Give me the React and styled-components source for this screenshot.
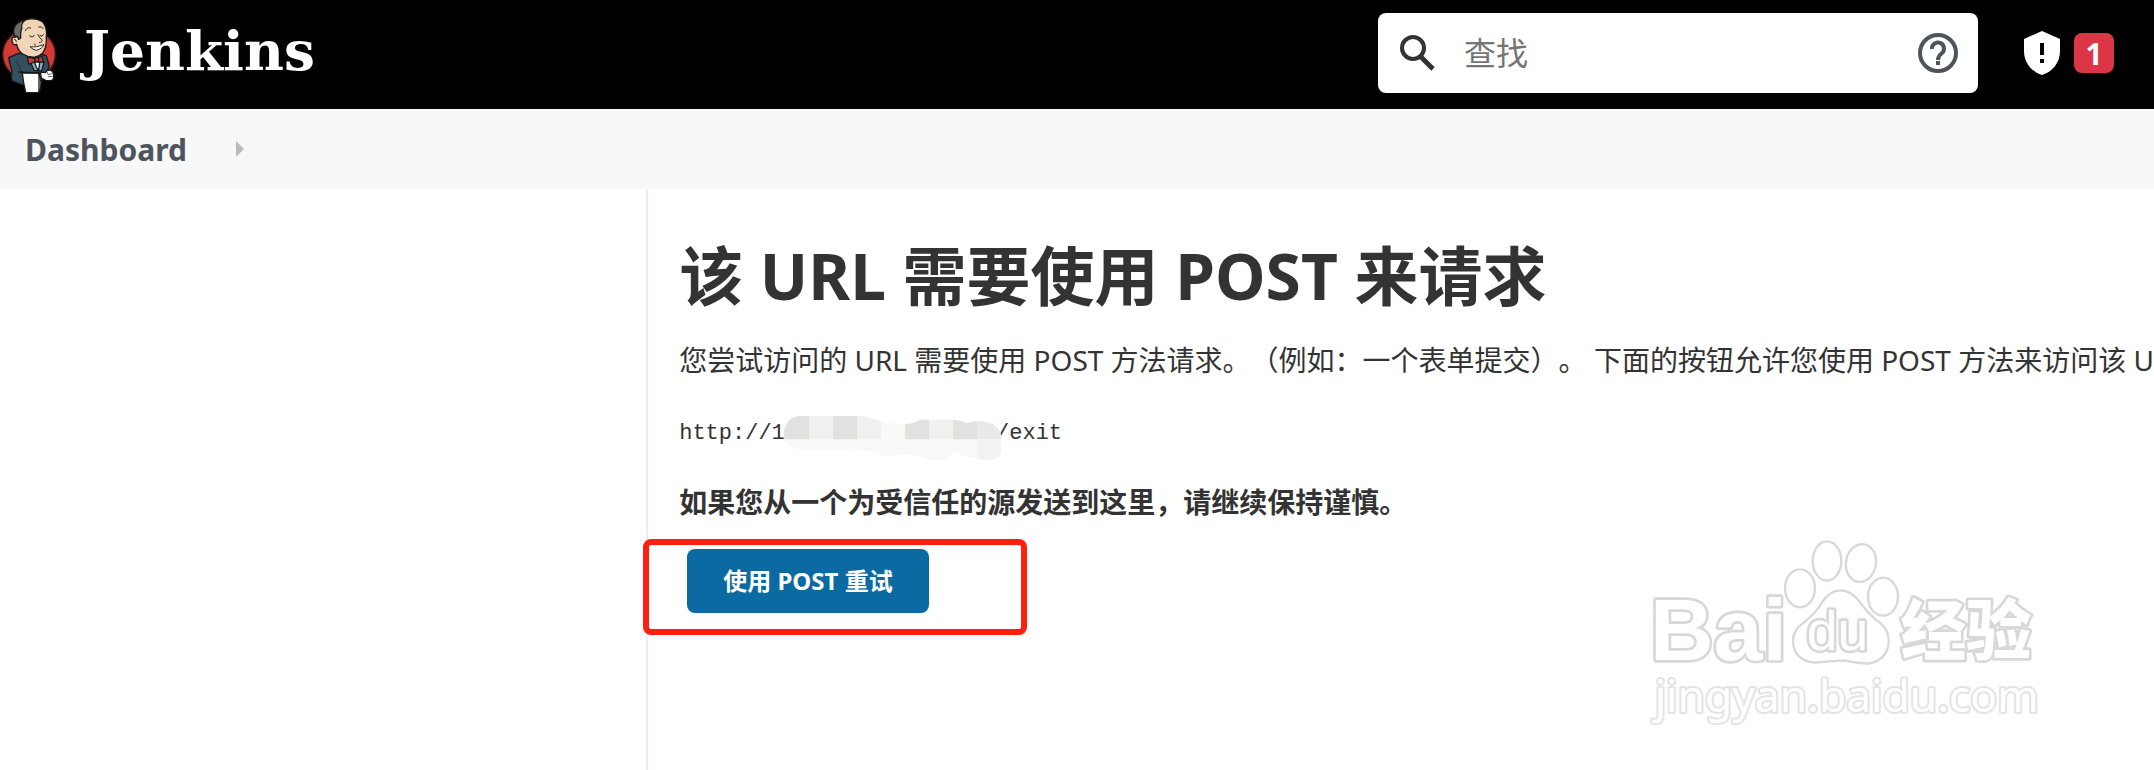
import React from 'react'
import styled, { createGlobalStyle } from 'styled-components'

const sans = '"Noto Sans", "Noto Sans CJK SC", sans-serif'
const textColor = '#333'
const slate = '#4d545d'

const GlobalStyle = createGlobalStyle`
  * {
    box-sizing: border-box;
  }

  body {
    margin: 0;
    background: #fff;
    color: ${textColor};
    font-family: ${sans};
    font-size: 28px;
    text-spacing-trim: space-all;
    overflow: hidden;
  }
`

const Page = styled.div`
  display: flex;
  flex-direction: column;
  min-height: 100vh;
  position: relative;
`

const Header = styled.header`
  display: flex;
  align-items: center;
  height: 109px;
  padding: 0 40px 4px 0;
  background: #000;
`

const Brand = styled.a`
  display: flex;
  align-items: center;
  gap: 14px;
  margin-right: auto;
  color: #fff;
  text-decoration: none;

  svg {
    display: block;
  }
`

const BrandName = styled.span`
  padding-bottom: 4px;
  font: bold 55px/96px "DejaVu Serif", serif;
`

const SearchBox = styled.form`
  display: flex;
  align-items: center;
  width: 600px;
  height: 80px;
  margin-right: 40px;
  padding: 0 20px;
  border-radius: 8px;
  background: #fff;

  label,
  a {
    display: flex;
  }
`

const SearchInput = styled.input`
  flex: 1;
  min-width: 0;
  margin: 0 24px 0 26px;
  padding: 0;
  border: 0;
  outline: 0;
  background: none;
  color: ${textColor};
  font: 32px/48px ${sans};

  &::placeholder {
    color: #757575;
    opacity: 1;
  }
`

const Monitor = styled.button`
  display: flex;
  align-items: center;
  gap: 14px;
  padding: 0 0 0 6px;
  border: 0;
  background: none;
  cursor: pointer;
`

const Badge = styled.span`
  width: 40px;
  height: 40px;
  border-radius: 8px;
  background: #dc3545;
  color: #fff;
  font: bold 30px/42px ${sans};
  text-align: center;
`

const Breadcrumbs = styled.nav`
  display: flex;
  align-items: center;
  gap: 49px;
  height: 80px;
  padding: 0 25px;
  background: #f8f8f8;

  a {
    color: ${slate};
    font-size: 30px;
    font-weight: bold;
    text-decoration: none;
  }
`

const Columns = styled.div`
  display: flex;
  flex: 1;
`

const SidePanel = styled.aside`
  flex: 0 0 30%;
`

const Main = styled.main`
  flex: 1;
  min-width: 0;
  padding: 40px 0 0 31px;
  border-left: 2px solid #e9eef0;
`

const Title = styled.h1`
  margin: 0;
  font-size: 64px;
  line-height: 94px;
  white-space: nowrap;
`

const Paragraph = styled.p`
  margin: ${props => props.$spaced ? '26px' : '16px'} 0 0;
  font-size: 28px;
  font-weight: ${props => props.$strong ? 'bold' : 'normal'};
  line-height: 42px;
  white-space: nowrap;
`

const Address = styled.pre`
  position: relative;
  margin: 32px 0 0;
  font: 22px/42px "Liberation Mono", monospace;
`

const Redaction = styled.svg`
  position: absolute;
  left: 103px;
  top: 2px;
`

const Actions = styled.form`
  position: relative;
  padding: 26px 0 0 8px;
`

const RetryButton = styled.button`
  display: block;
  height: 64px;
  padding: 0 36px;
  border: 0;
  border-radius: 8px;
  background: #0b6aa2;
  color: #fff;
  font: bold 24px/64px ${sans};
  cursor: pointer;
`

const Highlight = styled.div`
  position: absolute;
  left: -36px;
  top: 16px;
  width: 384px;
  height: 96px;
  border: 6px solid #ff1f0f;
  border-radius: 8px;
  pointer-events: none;
`

const Watermark = styled.svg`
  position: absolute;
  right: 94px;
  bottom: 30px;
  pointer-events: none;
`

const Butler = () => (
  <svg width="70" height="100" viewBox="0 0 210 300" aria-hidden="true">
    <ellipse cx="87" cy="154" rx="79" ry="76" fill="#d33833" stroke="#381a1a" strokeWidth="4" />
    <g stroke="#191919" strokeWidth="4" strokeLinejoin="round" strokeLinecap="round">
      <path d="M56 151 L26 164 Q31 190 36 204 Q32 222 37 234 L67 245 L119 240 L134 223 L148 190 L139 158 L120 153 Z" fill="#335061" />
      <path d="M47 102 Q34 101 36 113 Q38 129 50 124 Q54 143 68 153 Q86 164 106 162 Q128 157 134 139 Q140 124 139 101 Q142 75 129 58 Q113 45 86 48 Q61 53 53 72 Z" fill="#f0d6b7" />
      <path d="M75 51 Q50 56 43 73 Q38 85 43 99 Q54 98 56 109 L62 105 Q61 84 66 75 Q60 66 75 51 Z" fill="#6d6b6d" />
      <path d="M91 177 L109 173 L132 178 L125 204 L102 202 Z" fill="#81b0c4" />
      <path d="M104 178 L111 175 L119 179 L116 202 L109 193 Z" fill="#fff" />
      <path d="M82 162 L106 167 L126 160 L131 178 L113 176 L106 176 L86 184 Z" fill="#d33833" />
      <circle cx="110" cy="170" r="6" fill="#d33833" />
      <path d="M121 207 L136 209 Q142 198 153 202 Q162 207 161 220 Q162 231 151 233 L137 232 L124 225 Z" fill="#fff" />
      <path d="M67 210 L117 210 L123 237 L122 254 L117 268 L77 269 L71 240 Z" fill="#fff" />
      <path d="M56 207 L117 210 L117 266" fill="none" />
      <path d="M49 174 L67 209" fill="none" strokeWidth="2" />
      <path d="M142 208 L144 215 L157 212 M145 221 L157 220" fill="none" strokeWidth="2" />
    </g>
    <g fill="none" stroke="#30271f" strokeWidth="3" strokeLinecap="round">
      <path d="M76 83 Q81 71 92 75 M116 72 Q125 67 130 77" />
      <path d="M89 99 Q96 106 103 98 M120 98 Q126 103 131 95" />
      <path d="M114 95 Q119 107 126 110 Q128 118 118 119" />
      <path d="M91 132 Q109 134 132 125 Q127 137 109 142 Q98 140 91 132 Z" fill="#fff" />
      <path d="M44 109 Q48 108 49 116 M103 123 L107 126" />
    </g>
  </svg>
)

const SearchIcon = () => (
  <svg width="40" height="40" viewBox="0 0 40 40" fill="none" stroke={textColor} aria-hidden="true">
    <circle cx="15" cy="15" r="11" strokeWidth="4" />
    <path d="M23 24 L35 36" strokeWidth="5" />
  </svg>
)

const HelpIcon = () => (
  <svg width="40" height="40" viewBox="0 0 40 40" aria-hidden="true">
    <circle cx="20" cy="20" r="18" fill="none" stroke={slate} strokeWidth="4" />
    <path d="M14 16 A6 6 0 1 1 24 20 Q20 23 20 27" fill="none" stroke={slate} strokeWidth="4" />
    <path d="M18 28 H22 V32 H18 Z" fill={slate} />
  </svg>
)

const ShieldIcon = () => (
  <svg width="36" height="44" viewBox="0 0 36 44" aria-hidden="true">
    <path d="M18 0 L36 8 V20 C36 32 28 41 18 44 C8 41 0 32 0 20 V8 Z" fill="#fff" />
    <path d="M16 12 H20 V24 H16 Z M16 28 H20 V32 H16 Z" fill="#000" />
  </svg>
)

const AddressCover = () => (
  <Redaction width="220" height="46" viewBox="456 45 660 138" aria-hidden="true">
    <defs>
      <clipPath id="smudge">
        <path d="M460 100 Q470 50 510 48 H690 Q730 52 760 68 L830 71 Q855 70 870 59 H965 Q990 60 1010 70 Q1040 60 1070 66 Q1113 80 1114 115 V148 Q1112 180 1075 182 Q1050 180 1040 174 Q995 172 970 154 Q955 182 920 182 Q880 180 860 166 L800 164 Q760 172 735 158 Q700 147 660 146 H520 Q465 150 460 100 Z" />
      </clipPath>
    </defs>
    <g clipPath="url(#smudge)">
      <path d="M456 45 H1116 V183 H456 Z" fill="#f9f9f9" />
      <path d="M456 45 H537 V118 H456 Z M609 45 H681 V118 H609 Z M825 45 H897 V118 H825 Z M969 45 H1041 V118 H969 Z" fill="#e1e1e0" />
      <path d="M537 45 H609 V118 H537 Z M681 45 H753 V118 H681 Z M897 45 H969 V118 H897 Z" fill="#f0f0f0" />
      <path d="M1041 45 H1116 V118 H1041 Z" fill="#e9e9e9" />
      <path d="M1041 118 H1116 V183 H1041 Z" fill="#f3f3f3" />
    </g>
  </Redaction>
)

const BaiduMark = () => (
  <Watermark width="430" height="220" viewBox="0 0 1290 660">
    <g fill="#fff" stroke="#d8d8d8" strokeWidth="7" strokeLinejoin="round">
      <g fontFamily="Liberation Sans, sans-serif" fontWeight="bold" paintOrder="stroke" strokeWidth="16">
        <text x="60" y="420" fontSize="264">Bai</text>
        <text x="812" y="402" fontSize="196" fontFamily="Noto Sans CJK SC, sans-serif" fontWeight="900">经验</text>
      </g>
      <ellipse cx="510" cy="205" rx="45" ry="57" />
      <ellipse cx="591" cy="123" rx="43" ry="59" />
      <ellipse cx="693" cy="129" rx="45" ry="57" transform="rotate(10 693 129)" />
      <ellipse cx="759" cy="230" rx="45" ry="57" />
      <path d="M632 211 Q663 211 688 244 Q718 286 754 312 Q779 336 776 368 Q770 423 714 431 Q674 429 642 421 Q600 423 555 428 Q492 422 489 365 Q488 330 522 307 Q554 284 579 243 Q600 212 632 211 Z" />
      <text x="530" y="390" fontSize="166" fontFamily="Liberation Sans, sans-serif" paintOrder="stroke" strokeWidth="16">du</text>
      <text x="74" y="575" fontSize="133" fontFamily="Noto Sans, sans-serif" paintOrder="stroke" strokeWidth="12" stroke="#e4e4e4">jingyan.baidu.com</text>
    </g>
  </Watermark>
)

const App = () => {
  return (
    <Page>
      <GlobalStyle />
      <Header>
        <Brand href="#">
          <Butler />
          <BrandName>Jenkins</BrandName>
        </Brand>
        <SearchBox role="search">
          <label htmlFor="search" aria-label="查找"><SearchIcon /></label>
          <SearchInput id="search" type="text" placeholder="查找" />
          <a href="#help" aria-label="Help"><HelpIcon /></a>
        </SearchBox>
        <Monitor type="button">
          <ShieldIcon />
          <Badge>1</Badge>
        </Monitor>
      </Header>
      <Breadcrumbs>
        <a href="#">Dashboard</a>
        <svg width="8" height="16" viewBox="0 0 8 16" aria-hidden="true">
          <path d="M0 0 L8 8 L0 16 Z" fill="#bbb" />
        </svg>
      </Breadcrumbs>
      <Columns>
        <SidePanel />
        <Main>
          <Title>该 URL 需要使用 POST 来请求</Title>
          <Paragraph>
            您尝试访问的 URL 需要使用 POST 方法请求。（例如：一个表单提交）。 下面的按钮允许您使用 POST 方法来访问该 URL
          </Paragraph>
          <Address>
            {'http://1         7     2/exit'}
            <AddressCover />
          </Address>
          <Paragraph $strong $spaced>如果您从一个为受信任的源发送到这里，请继续保持谨慎。</Paragraph>
          <Actions>
            <RetryButton type="button">使用 POST 重试</RetryButton>
            <Highlight />
          </Actions>
        </Main>
      </Columns>
      <BaiduMark />
    </Page>
  )
}

export default App
